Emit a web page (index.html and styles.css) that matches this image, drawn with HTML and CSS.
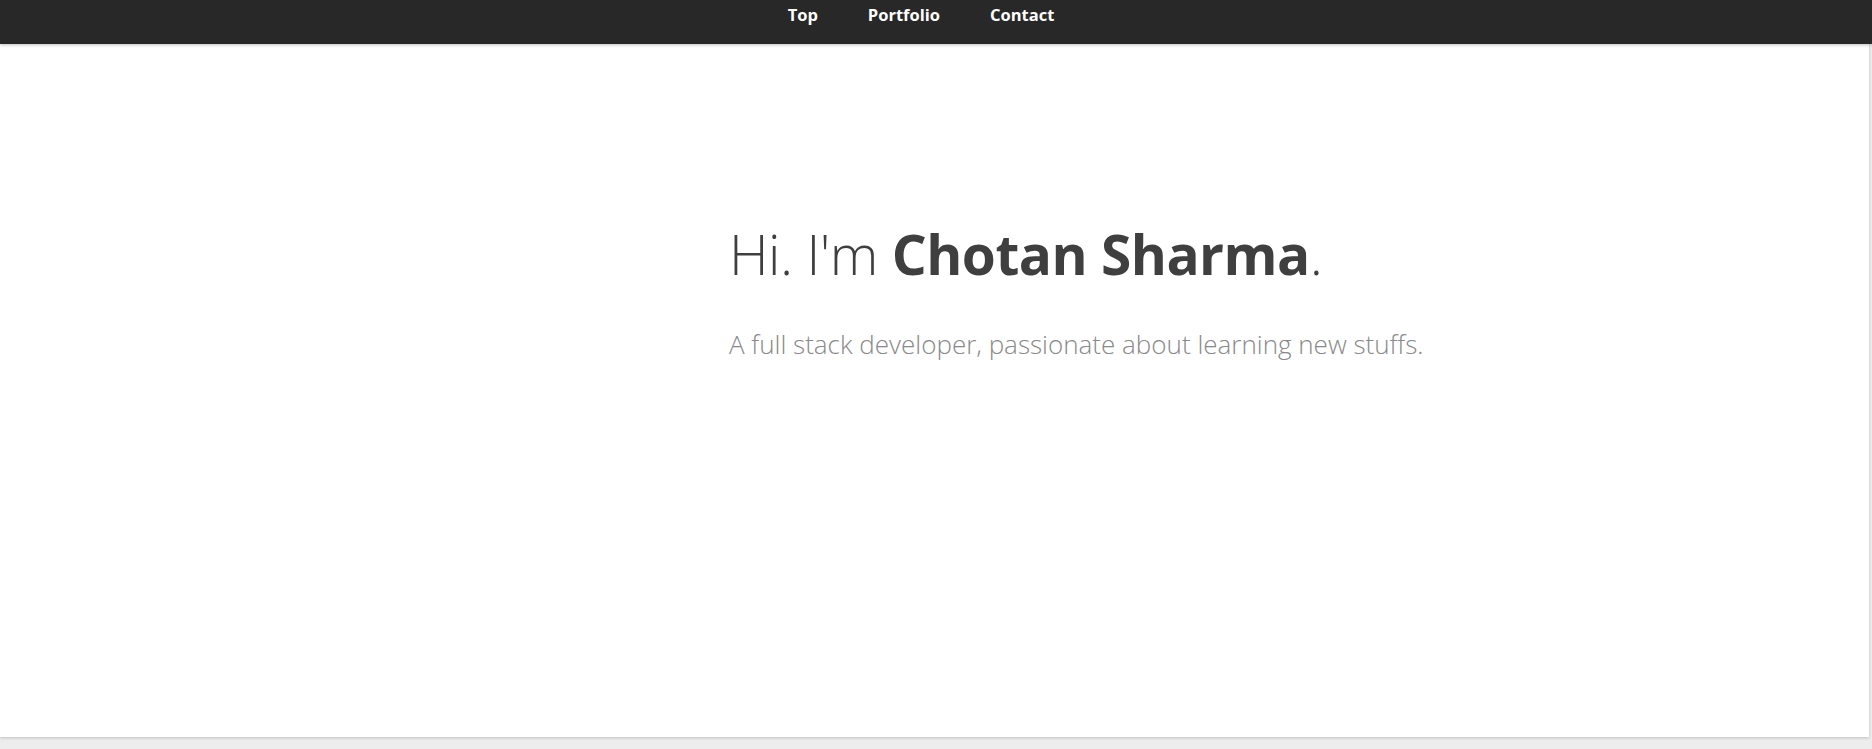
FILE: index.html
```html
<!DOCTYPE html>
<html lang="en">
<head>
<meta charset="utf-8">
<title>Chotan Sharma</title>
<link rel="stylesheet" href="styles.css">
</head>
<body>
<header class="topbar">
  <nav class="nav">
    <a href="#top" class="nav-link">Top</a>
    <a href="#portfolio" class="nav-link">Portfolio</a>
    <a href="#contact" class="nav-link">Contact</a>
  </nav>
</header>
<section class="intro" id="top">
  <div class="intro-inner">
    <h1 class="intro-title">Hi. I'm <strong>Chotan Sharma</strong>.</h1>
    <p class="intro-sub">A full stack developer, passionate about learning new stuffs.</p>
  </div>
</section>
<div class="below"></div>
</body>
</html>
```
FILE: styles.css
```css
html, body {
  margin: 0;
  padding: 0;
}
body {
  background: #ededed;
  font-family: "Open Sans", "Liberation Sans", sans-serif;
  height: 749px;
  overflow: hidden;
}
.topbar {
  height: 44px;
  background: #282828;
  box-shadow: 0 1px 3px rgba(0,0,0,0.25);
  position: relative;
  z-index: 2;
}
.nav {
  display: flex;
  justify-content: center;
  gap: 50px;
  padding-right: 30px;
  height: 44px;
  align-items: flex-start;
}
.nav-link {
  color: #ffffff;
  font-weight: 700;
  font-size: 16.5px;
  text-decoration: none;
  line-height: 30px;
}
.intro {
  height: 693px;
  background: #ffffff;
  margin-right: 3px;
  box-shadow: 0 1px 3px rgba(0,0,0,0.2);
  position: relative;
  z-index: 1;
}
.intro-inner {
  padding-left: 729px;
  padding-top: 170px;
}
.intro-title {
  margin: 0;
  font-weight: 300;
  font-size: 55px;
  line-height: 80px;
  color: #3f3f3f;
  letter-spacing: -0.5px;
}
.intro-title strong {
  font-weight: 700;
}
.intro-sub {
  margin: 30px 0 0;
  font-weight: 300;
  font-size: 26px;
  line-height: 40px;
  color: #898989;
}
.below {
  height: 12px;
}
```
